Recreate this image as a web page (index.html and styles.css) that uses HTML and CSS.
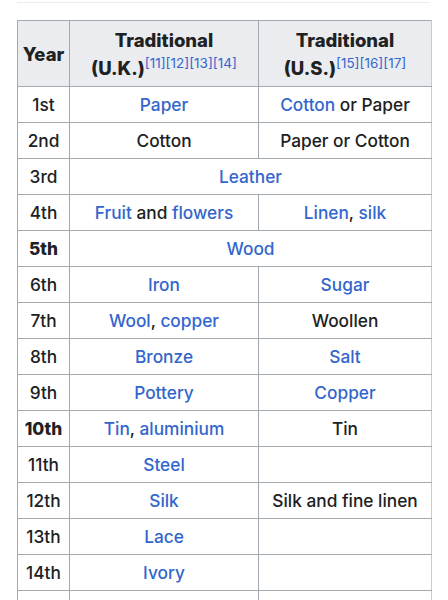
FILE: index.html
```html
<!DOCTYPE html>
<html>
<head>
<meta charset="utf-8">
<link rel="stylesheet" href="styles.css">
</head>
<body>
<div class="page">
  <div class="rule"></div>
  <table class="wiki">
    <colgroup>
      <col class="c-year">
      <col class="c-uk">
      <col class="c-us">
    </colgroup>
    <thead>
      <tr>
        <th>Year</th>
        <th>Traditional<br>(U.K.)<sup><a>[11]</a><a>[12]</a><a>[13]</a><a>[14]</a></sup></th>
        <th>Traditional<br>(U.S.)<sup><a>[15]</a><a>[16]</a><a>[17]</a></sup></th>
      </tr>
    </thead>
    <tbody>
      <tr><td>1st</td><td><a>Paper</a></td><td><a>Cotton</a> or Paper</td></tr>
      <tr><td>2nd</td><td>Cotton</td><td>Paper or Cotton</td></tr>
      <tr><td>3rd</td><td colspan="2"><a>Leather</a></td></tr>
      <tr><td>4th</td><td><a>Fruit</a> and <a>flowers</a></td><td><a>Linen</a>, <a>silk</a></td></tr>
      <tr><td class="b">5th</td><td colspan="2"><a>Wood</a></td></tr>
      <tr><td>6th</td><td><a>Iron</a></td><td><a>Sugar</a></td></tr>
      <tr><td>7th</td><td><a>Wool</a>, <a>copper</a></td><td>Woollen</td></tr>
      <tr><td>8th</td><td><a>Bronze</a></td><td><a>Salt</a></td></tr>
      <tr><td>9th</td><td><a>Pottery</a></td><td><a>Copper</a></td></tr>
      <tr><td class="b">10th</td><td><a>Tin</a>, <a>aluminium</a></td><td>Tin</td></tr>
      <tr><td>11th</td><td><a>Steel</a></td><td></td></tr>
      <tr><td>12th</td><td><a>Silk</a></td><td>Silk and fine linen</td></tr>
      <tr><td>13th</td><td><a>Lace</a></td><td></td></tr>
      <tr><td>14th</td><td><a>Ivory</a></td><td></td></tr>
      <tr><td></td><td></td><td></td></tr>
    </tbody>
  </table>
</div>
</body>
</html>
```

FILE: styles.css
```css
html, body {
  margin: 0;
  padding: 0;
  background: #ffffff;
}
body {
  font-family: Inter, "Noto Sans", "Liberation Sans", sans-serif;
  color: #202122;
  overflow: hidden;
}
.page {
  padding: 2px 0 0 17px;
}
.rule {
  width: 413px;
  height: 1px;
  background: #eaecf0;
}
.wiki {
  margin-top: 17px;
  border-collapse: collapse;
  table-layout: fixed;
  width: 414px;
  font-size: 17.3px;
  border-right: 1px solid #c8ccd1;
}
.c-year { width: 52px; }
.c-uk { width: 189px; }
.c-us { width: 173px; }
.wiki th, .wiki td {
  border: 1px solid #a2a9b1;
  text-align: center;
  padding: 0 2px;
}
.wiki tr > :last-child {
  border-right-color: #c8ccd1;
}
.wiki th {
  background: #eaecf0;
  font-weight: 800;
  font-size: 18.5px;
  height: 64px;
  line-height: 28px;
  padding-top: 1px;
}
.wiki td {
  height: 35px;
  font-weight: 500;
}
.wiki td.b {
  font-weight: 800;
}
.wiki a {
  color: #3366cc;
}
.wiki sup {
  font-size: 13.5px;
  font-weight: 400;
  line-height: 0;
  vertical-align: 7px;
}
```
